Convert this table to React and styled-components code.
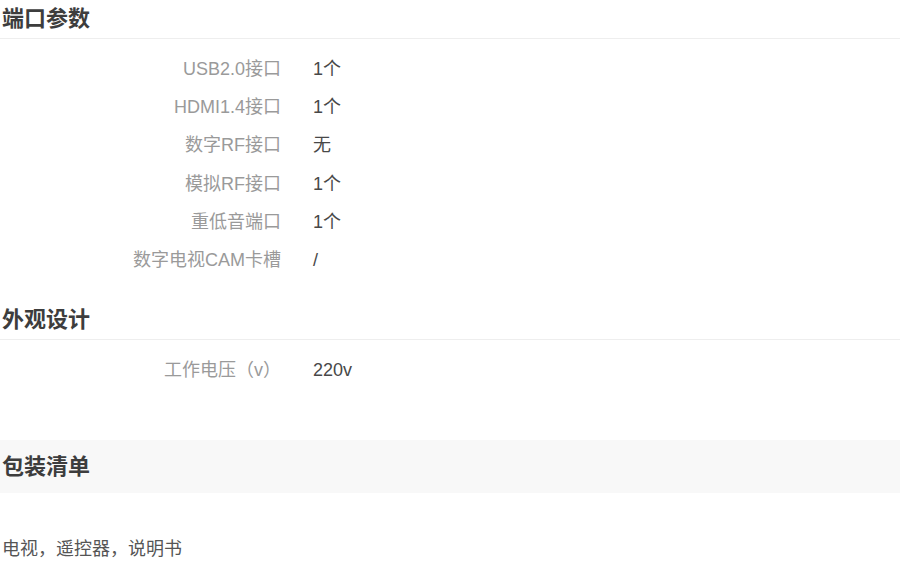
import React from 'react';
import styled, { createGlobalStyle } from 'styled-components';

const GlobalStyle = createGlobalStyle`
    body {
        margin: 0;
        background: #fff;
        font-family: "Liberation Sans", "Noto Sans CJK SC", sans-serif;
    }
`

const Page = styled.div`
    width: 900px;
`

const SectionTitle = styled.h3`
    margin: 0;
    padding: 0 2px;
    height: 38px;
    line-height: 38px;
    font-size: 22px;
    font-weight: 700;
    color: #3d3d3d;
    border-bottom: 1px solid #eeeeee;
    background: ${props => props.$shaded ? '#f8f8f8' : 'transparent'};
    ${props => props.$shaded && `
        height: 53px;
        line-height: 53px;
        border-bottom: none;
    `}
`

const ParamList = styled.dl`
    margin: 0;
    padding: 11px 0 0;
    display: grid;
    grid-template-columns: 281px 1fr;
    column-gap: 32px;
    font-size: 18px;
`

const Label = styled.dt`
    text-align: right;
    color: #9a9a9a;
    line-height: 38.2px;
    white-space: nowrap;
`

const Value = styled.dd`
    margin: 0;
    color: #484848;
    line-height: 38.2px;
`

const Section = styled.section`
    margin-bottom: ${props => props.$gap || 0}px;
`

const PackText = styled.p`
    margin: 44px 0 0;
    padding-left: 2px;
    font-size: 18px;
    line-height: 24px;
    color: #555;
`

const ports = [
    ['USB2.0接口', '1个'],
    ['HDMI1.4接口', '1个'],
    ['数字RF接口', '无'],
    ['模拟RF接口', '1个'],
    ['重低音端口', '1个'],
    ['数字电视CAM卡槽', '/'],
];

const looks = [
    ['工作电压（v）', '220v'],
];

function Params({ items }) {
    return (
        <ParamList>
            {items.map(([k, v]) => (
                <React.Fragment key={k}>
                    <Label>{k}</Label>
                    <Value>{v}</Value>
                </React.Fragment>
            ))}
        </ParamList>
    );
}

export default function App() {
    return (
        <Page>
            <GlobalStyle />
            <Section $gap={22}>
                <SectionTitle>端口参数</SectionTitle>
                <Params items={ports} />
            </Section>
            <Section $gap={51}>
                <SectionTitle>外观设计</SectionTitle>
                <Params items={looks} />
            </Section>
            <Section>
                <SectionTitle $shaded>包装清单</SectionTitle>
                <PackText>电视，遥控器，说明书</PackText>
            </Section>
        </Page>
    );
}
